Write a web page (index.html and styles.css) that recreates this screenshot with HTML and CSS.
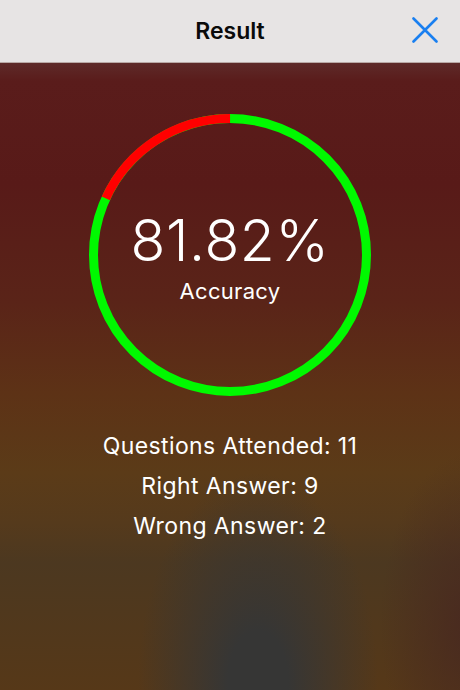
FILE: index.html
```html
<!DOCTYPE html>
<html lang="en">
<head>
    <meta charset="UTF-8">
    <meta name="viewport" content="width=device-width, initial-scale=1.0">
    <title>Result</title>
    <link rel="stylesheet" href="styles.css">
</head>
<body>
    <header class="navbar">
        <h1 class="navbar-title">Result</h1>
        <button class="btn-close" aria-label="Close">
            <svg width="26" height="26" viewBox="0 0 26 26">
                <path d="M1.5 1.5 L24.5 24.5 M24.5 1.5 L1.5 24.5" stroke="#1a7ff0" stroke-width="2.6" stroke-linecap="round" fill="none"/>
            </svg>
        </button>
    </header>

    <main class="result">
        <!-- anel de acertos / erros -->
        <div class="ring">
            <svg class="ring-chart" width="282" height="282" viewBox="0 0 282 282">
                <circle cx="141" cy="141" r="136.5" fill="none" stroke="#00f900" stroke-width="9"/>
                <!-- erros: 2/11 do anel, no sentido anti-horário a partir do topo -->
                <circle cx="141" cy="141" r="136.5" fill="none" stroke="#ff0000" stroke-width="9"
                        stroke-dasharray="155.9 1000" transform="rotate(-155.45 141 141)"/>
            </svg>
            <div class="ring-label">
                <div class="ring-value">81.82%</div>
                <div class="ring-caption">Accuracy</div>
            </div>
        </div>

        <ul class="stats">
            <li>Questions Attended: 11</li>
            <li>Right Answer: 9</li>
            <li>Wrong Answer: 2</li>
        </ul>
    </main>
</body>
</html>
```

FILE: styles.css
```css
* {
    margin: 0;
    padding: 0;
    box-sizing: border-box;
}

body {
    font-family: 'Inter', 'Roboto', 'Liberation Sans', sans-serif;
    background-color: #4a3826;
    color: #fff;
    width: 460px;
    min-height: 690px;
    overflow: hidden;
}

/* Barra superior */
.navbar {
    height: 63px;
    background-color: #e7e4e4;
    border-bottom: 1px solid #b9a9a6;
    display: flex;
    align-items: center;
    justify-content: center;
    position: relative;
}

.navbar-title {
    font-size: 23px;
    font-weight: 600;
    color: #0a0a0a;
}

.btn-close {
    position: absolute;
    right: 22px;
    top: 17px;
    background: none;
    border: none;
    width: 26px;
    height: 26px;
    cursor: pointer;
}

.btn-close svg {
    display: block;
}

/* Área do resultado (posições do fundo relativas ao main) */
.result {
    min-height: 627px;
    display: flex;
    flex-direction: column;
    align-items: center;
    padding-top: 51px;
    background:
        radial-gradient(ellipse 120px 210px at 258px 620px, rgba(54, 54, 53, 1) 25%, rgba(54, 54, 53, 0)),
        radial-gradient(ellipse 90px 170px at 470px 560px, rgba(72, 40, 32, 0.9), rgba(72, 40, 32, 0)),
        linear-gradient(to bottom,
            #5e2a29 0px,
            #5a1c1b 18px,
            #581a18 120px,
            #5a2418 240px,
            #5d3216 330px,
            #5b3b18 410px,
            #553a1c 460px,
            #4c3820 500px,
            #563818 627px);
}

.ring {
    display: grid;
    width: 282px;
    height: 282px;
}

.ring-chart,
.ring-label {
    grid-area: 1 / 1;
}

.ring-label {
    display: flex;
    flex-direction: column;
    align-items: center;
    padding-top: 99px;
}

.ring-value {
    font-size: 57px;
    font-weight: 300;
    line-height: 56px;
    letter-spacing: 0.6px;
}

.ring-caption {
    font-size: 22px;
    line-height: 24px;
    margin-top: 10px;
    letter-spacing: 0.3px;
}

/* Estatísticas */
.stats {
    list-style: none;
    margin-top: 30px;
    text-align: center;
}

.stats li {
    font-size: 23px;
    line-height: 40px;
    letter-spacing: 0.4px;
}
```
